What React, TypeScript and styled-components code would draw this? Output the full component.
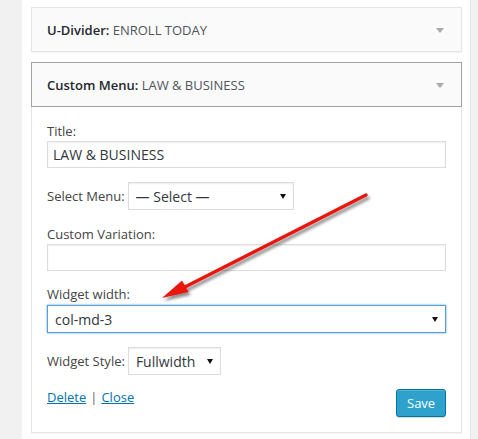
import React from "react";
import styled, { createGlobalStyle } from "styled-components";

const GlobalStyle = createGlobalStyle`
  html, body { margin: 0; padding: 0; background: #f1f1f1; }
  body { font-family: "Open Sans", "Liberation Sans", sans-serif; font-size: 13px; color: #444; }
  * { box-sizing: border-box; }
`;

const Page = styled.div`
  position: relative;
  width: 478px;
  height: 439px;
  overflow: hidden;
  background: #f1f1f1;
  display: flex;
`;

const Panel = styled.div`
  margin-left: 22px;
  width: 449px;
  background: #fff;
  border-right: 1px solid #e7e7e7;
  padding: 7px 8px 0 9px;
  display: flex;
  flex-direction: column;
`;

const Widget = styled.div`
  margin-bottom: 10px;
  box-shadow: 0 1px 1px rgba(0, 0, 0, 0.04);
`;

const WidgetTop = styled.div<{ $open?: boolean }>`
  height: 45px;
  display: flex;
  align-items: center;
  justify-content: space-between;
  padding: 0 17px 0 15px;
  background: #fafafa;
  border: 1px solid ${(p) => (p.$open ? "#a2a2a2" : "#e5e5e5")};
`;

const WidgetTitle = styled.h3`
  margin: 0;
  font-size: 13px;
  line-height: 18px;
  font-weight: 600;
  color: #23282d;
`;

const InTitle = styled.span`
  font-weight: 400;
  color: #4f555c;
`;

const Toggle = styled.span`
  width: 0;
  height: 0;
  border-left: 4px solid transparent;
  border-right: 4px solid transparent;
  border-top: 5px solid #aaa;
  margin-top: 2px;
`;

const WidgetBody = styled.div`
  border: 1px solid #e5e5e5;
  border-top: none;
  background: #fff;
  padding: 15px 15px 15px;
  display: flex;
  flex-direction: column;
`;

const Label = styled.label<{ $mt?: number }>`
  display: block;
  font-size: 13px;
  line-height: 18px;
  color: #444;
  margin-top: ${(p) => p.$mt ?? 0}px;
`;

const TextInput = styled.input`
  display: block;
  width: 100%;
  height: 27px;
  margin: 1px 0 0;
  padding: 0 5px;
  border: 1px solid #ddd;
  box-shadow: inset 0 1px 2px rgba(0, 0, 0, 0.07);
  background: #fff;
  font-family: "Open Sans", "Liberation Sans", sans-serif;
  font-size: 14px;
  color: #32373c;
  outline: none;
`;

const Row = styled.div<{ $mt?: number }>`
  display: flex;
  align-items: center;
  gap: 3px;
  margin-top: ${(p) => p.$mt ?? 0}px;
`;

const SelectWrap = styled.div<{ $w?: string; $mt?: number; $focus?: boolean }>`
  position: relative;
  width: ${(p) => p.$w ?? "auto"};
  height: 28px;
  margin-top: ${(p) => p.$mt ?? 0}px;
  border: 1px solid ${(p) => (p.$focus ? "#5b9dd9" : "#ddd")};
  box-shadow: ${(p) =>
    p.$focus ? "0 0 2px rgba(30, 140, 190, 0.8)" : "inset 0 1px 2px rgba(0, 0, 0, 0.07)"};
  background: #fff;
  &::after {
    content: "";
    position: absolute;
    right: 7px;
    top: 11px;
    width: 0;
    height: 0;
    border-left: 3px solid transparent;
    border-right: 3px solid transparent;
    border-top: 5px solid #111;
    pointer-events: none;
  }
`;

const Select = styled.select`
  appearance: none;
  -webkit-appearance: none;
  width: 100%;
  height: 100%;
  border: none;
  background: transparent;
  padding: 0 20px 0 7px;
  margin: 0;
  font-family: "Open Sans", "Liberation Sans", sans-serif;
  font-size: 14px;
  color: #32373c;
  outline: none;
`;

const Footer = styled.div`
  display: flex;
  justify-content: space-between;
  align-items: flex-start;
  margin-top: 13px;
`;

const Links = styled.div`
  font-size: 13px;
  line-height: 18px;
  color: #555;
`;

const Link = styled.a`
  color: #0073aa;
  text-decoration: underline;
`;

const Sep = styled.span`
  margin: 0 4px;
  color: #666;
`;

const SaveButton = styled.button`
  margin-top: 1px;
  width: 50px;
  height: 28px;
  padding: 0 10px 2px;
  border: 1px solid #0074a2;
  border-radius: 3px;
  background: #2ea2cc;
  box-shadow: inset 0 1px 0 rgba(120, 200, 230, 0.5), 0 1px 0 rgba(0, 0, 0, 0.15);
  color: #fff;
  font-family: "Open Sans", "Liberation Sans", sans-serif;
  font-size: 13px;
  line-height: 26px;
`;

const Annotation = styled.svg`
  position: absolute;
  left: 0;
  top: 0;
  pointer-events: none;
`;

export default function App() {
  return (
    <>
      <GlobalStyle />
      <Page>
        <Panel>
          <Widget>
            <WidgetTop>
              <WidgetTitle>
                U-Divider<span>:</span> <InTitle>ENROLL TODAY</InTitle>
              </WidgetTitle>
              <Toggle />
            </WidgetTop>
          </Widget>
          <Widget>
            <WidgetTop $open>
              <WidgetTitle>
                Custom Menu<span>:</span> <InTitle>LAW &amp; BUSINESS</InTitle>
              </WidgetTitle>
              <Toggle />
            </WidgetTop>
            <WidgetBody>
              <Label>Title:</Label>
              <TextInput defaultValue="LAW & BUSINESS" />
              <Row $mt={14}>
                <Label>Select Menu:</Label>
                <SelectWrap $w="166px">
                  <Select defaultValue="">
                    <option value="">— Select —</option>
                  </Select>
                </SelectWrap>
              </Row>
              <Label $mt={15}>Custom Variation:</Label>
              <TextInput defaultValue="" />
              <Label $mt={14}>Widget width:</Label>
              <SelectWrap $w="100%" $mt={2} $focus>
                <Select defaultValue="col-md-3">
                  <option value="col-md-3">col-md-3</option>
                </Select>
              </SelectWrap>
              <Row $mt={14}>
                <Label>Widget Style:</Label>
                <SelectWrap $w="93px">
                  <Select defaultValue="full">
                    <option value="full">Fullwidth</option>
                  </Select>
                </SelectWrap>
              </Row>
              <Footer>
                <Links>
                  <Link href="#">Delete</Link>
                  <Sep>|</Sep>
                  <Link href="#">Close</Link>
                </Links>
                <SaveButton>Save</SaveButton>
              </Footer>
            </WidgetBody>
          </Widget>
        </Panel>
        <Annotation width="478" height="439" viewBox="0 0 478 439">
          <defs>
            <filter id="arrowShadow" x="-20%" y="-20%" width="140%" height="140%">
              <feDropShadow dx="2" dy="3" stdDeviation="1.5" floodColor="#000" floodOpacity="0.45" />
            </filter>
          </defs>
          <g filter="url(#arrowShadow)">
            <line x1="366" y1="195" x2="180" y2="289.5" stroke="#e8160f" strokeWidth="3.5" strokeLinecap="round" />
            <polygon points="162,298 182,280.5 188.5,292" fill="#e8160f" />
          </g>
        </Annotation>
      </Page>
    </>
  );
}
